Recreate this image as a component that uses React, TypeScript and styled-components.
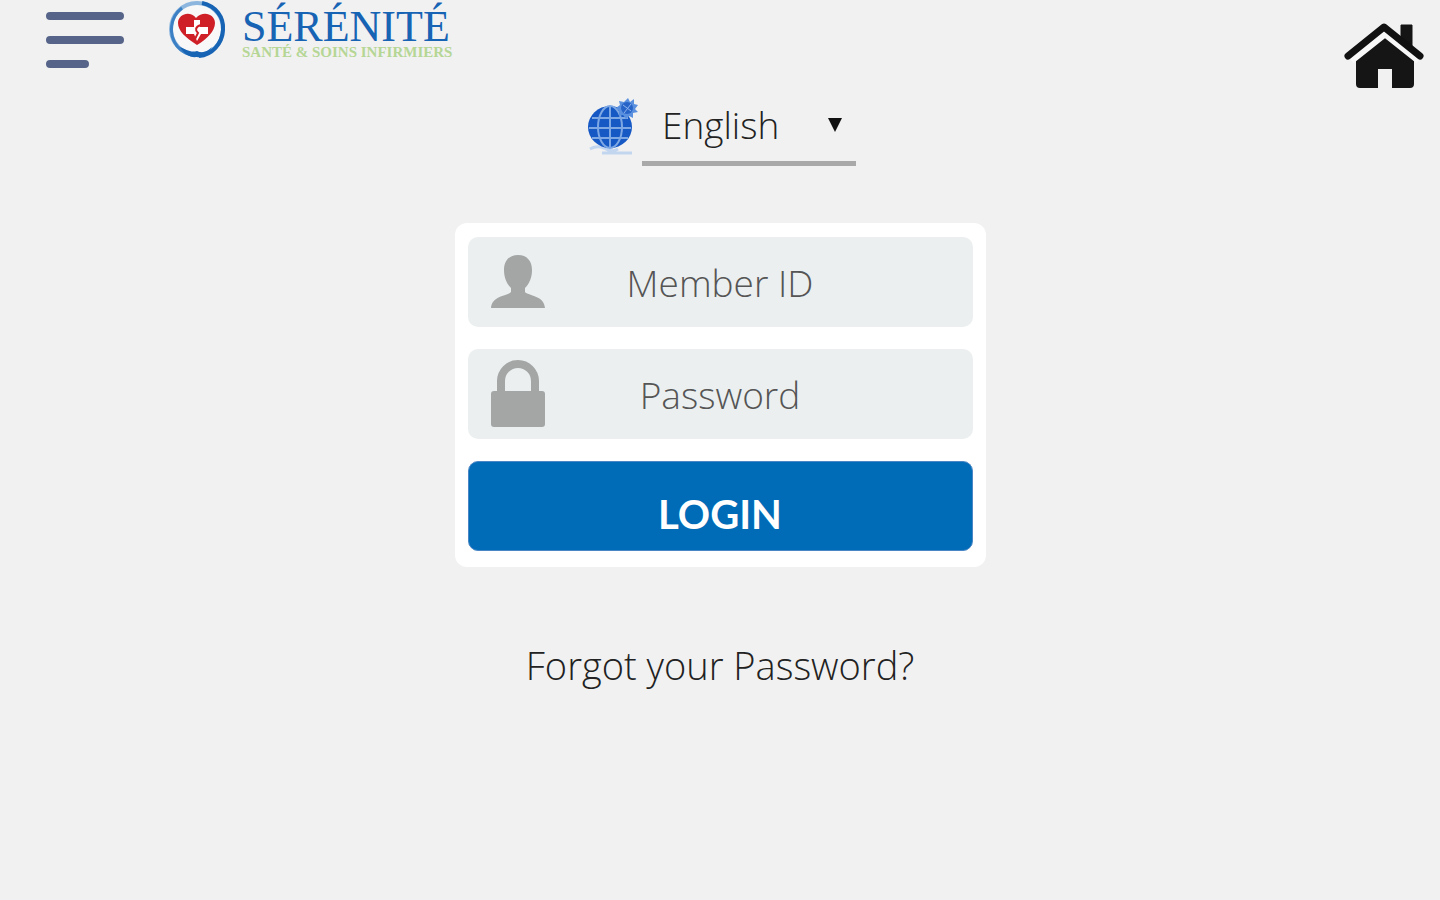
import React, { useState } from "react";
import styled, { createGlobalStyle } from "styled-components";

const GlobalStyle = createGlobalStyle`
  *, *::before, *::after { box-sizing: border-box; }
  body {
    margin: 0;
    background: #f1f1f1;
    color: #222;
    font-family: "Open Sans", "Noto Sans", sans-serif;
    font-weight: 300;
  }
  button, input, select { font: inherit; color: inherit; margin: 0; }
`;

const Page = styled.div`
  display: flex;
  flex-direction: column;
  min-height: 100vh;
`;

const Header = styled.header`
  display: flex;
  align-items: flex-start;
  height: 96px;
  padding: 0 14px 0 44px;
`;

const MenuButton = styled.button`
  display: flex;
  padding: 8px 0 0;
  border: 0;
  background: none;
  cursor: pointer;
`;

const Brand = styled.a`
  display: flex;
  align-items: flex-start;
  gap: 16px;
  margin-left: 42px;
  text-decoration: none;
`;

const BrandText = styled.span`
  display: flex;
  flex-direction: column;
  padding-top: 8px;
  font-family: "Liberation Serif", serif;
  font-weight: 400;
  white-space: nowrap;
`;

const BrandName = styled.span`
  color: #1763b4;
  font-size: 44px;
  line-height: 38px;
`;

const BrandTagline = styled.span`
  color: #b5d694;
  font-size: 15px;
  font-weight: 700;
  line-height: 12px;
`;

const HomeLink = styled.a`
  display: flex;
  margin-left: auto;
  padding-top: 22px;
`;

const Main = styled.main`
  display: flex;
  flex-direction: column;
  align-items: center;
  padding: 0 16px;
`;

const Language = styled.div`
  display: flex;
  align-items: flex-start;
  gap: 4px;
  padding-left: 4px;
`;

const SelectBox = styled.div`
  display: grid;
  align-items: center;
  width: 214px;
  height: 70px;
  border-bottom: 5px solid #a9a9a9;

  > * { grid-area: 1 / 1; }
  > svg { justify-self: end; margin-right: 14px; margin-bottom: 8px; pointer-events: none; }
`;

const Select = styled.select`
  appearance: none;
  width: 100%;
  height: 60px;
  padding: 0 40px 8px 20px;
  border: 0;
  background: none;
  font-size: 37px;
`;

const Card = styled.form`
  display: flex;
  flex-direction: column;
  gap: 22px;
  width: 100%;
  max-width: 531px;
  margin-top: 57px;
  padding: 14px 13px 16px;
  border-radius: 12px;
  background: #fff;
`;

const Field = styled.label`
  display: grid;
  align-items: center;
  height: 90px;
  border-radius: 10px;
  background: #ebeff0;

  > * { grid-area: 1 / 1; }
  > svg { margin-left: 22px; pointer-events: none; }
`;

const Input = styled.input`
  width: 100%;
  height: 90px;
  padding: 0 80px;
  border: 0;
  border-radius: 10px;
  background: none;
  font-size: 37px;
  text-align: center;

  &::placeholder { color: #555; opacity: 1; }
`;

const LoginButton = styled.button`
  height: 90px;
  padding: 16px 0 0;
  border: 1px solid #4a86c6;
  border-radius: 10px;
  background: #006cb8;
  color: #fff;
  font-family: Lato, sans-serif;
  font-size: 40px;
  font-weight: 700;
  cursor: pointer;
`;

const ForgotLink = styled.a`
  margin: 73px 0 40px;
  color: #222;
  font-size: 38px;
  line-height: 50px;
  text-decoration: none;
`;

const MenuIcon = () => (
  <svg width="82" height="64" viewBox="0 0 82 64" aria-hidden="true">
    <path d="M6 8H76M6 32H76M6 56H41" stroke="#56648a" strokeWidth="8" strokeLinecap="round" />
  </svg>
);

const BrandMark = () => (
  <svg width="58" height="60" viewBox="0 0 58 60" fill="none" aria-hidden="true">
    <circle cx="29" cy="29" r="26" fill="#f8f8f8" stroke="#8db6df" strokeWidth="4" />
    <path d="M14 8C2 17 0 34 9 46c5 6 12 9 18 9" stroke="#3b80c4" strokeWidth="3" />
    <path d="M34 3c14 3 22 14 21 27-1 14-11 25-24 26" stroke="#1763b4" strokeWidth="4" />
    <path d="M12 47c6 2 10 6 17 4 6 3 11 0 15-4-4 8-10 11-15 10-7 1-13-3-17-10Z" fill="#1763b4" />
    <path d="M29 45C18 38 10 31 10 23c0-9 12-13 18-5 7-8 19-4 19 5 0 8-8 16-18 22Z" fill="#cf2028" />
    <path d="M26 20h6v7h8v7h-7l-4 7-3-7h-8v-7h8Z" fill="#fff" />
    <path d="M33 25c-6 2-6 5-3 8l-3 6" stroke="#cf2028" strokeWidth="2" />
  </svg>
);

const HomeIcon = () => (
  <svg width="82" height="68" viewBox="0 0 82 68" aria-hidden="true">
    <path d="M57 3h11v26L57 20Z" fill="#151515" stroke="#151515" strokeWidth="1" strokeLinejoin="round" />
    <path d="M12 38 41 14l29 23v25q0 4-4 4H48V47H34v19H16q-4 0-4-4Z" fill="#151515" />
    <path d="M7 38 41 11l34 27" fill="none" stroke="#f8f8f8" strokeWidth="8" />
    <path d="M4 34 40 5l36 29" fill="none" stroke="#111" strokeWidth="7" strokeLinejoin="round" strokeLinecap="round" />
  </svg>
);

const GlobeIcon = () => (
  <svg width="50" height="60" viewBox="0 0 50 60" fill="none" aria-hidden="true">
    <path d="M2 53q7-4 14-1 8 5 14 1M14 57h30" stroke="#c3d6f0" strokeWidth="3" />
    <ellipse cx="22" cy="31" rx="22" ry="21" fill="#1759c4" />
    <path d="M4 22h36M1 32h42M4 42h36" stroke="#7ea8e4" strokeWidth="2" />
    <path d="M22 10v42" stroke="#7ea8e4" strokeWidth="2" />
    <ellipse cx="22" cy="31" rx="12" ry="21" stroke="#7ea8e4" strokeWidth="2" />
    <path d="m40 2 2 4 4-3v5l4 1-3 4 3 3-5 1v5l-4-2-3 3-3-4-4 1V15l-3-3 4-3-1-4 5 1Z" fill="#5b90df" />
    <circle cx="39" cy="12" r="6" fill="#2864c8" />
    <path d="m35 9 8 6M43 8l-7 9" stroke="#8db4ee" strokeWidth="1" />
  </svg>
);

const ArrowIcon = () => (
  <svg width="14" height="14" viewBox="0 0 14 14" aria-hidden="true">
    <path d="M0 0h14L7 14Z" fill="#111" />
  </svg>
);

const UserIcon = () => (
  <svg width="56" height="56" viewBox="0 0 56 56" aria-hidden="true">
    <path d="M28 1c9 0 14 6 14 15 0 8-3 14-7 18v4c3 4 19 3 20 16H1c1-13 17-12 20-16v-4c-4-4-7-10-7-18C14 7 19 1 28 1Z" fill="#a3a6a5" />
  </svg>
);

const LockIcon = () => (
  <svg width="56" height="68" viewBox="0 0 56 68" aria-hidden="true">
    <path d="M11 34V21a17 17 0 0 1 34 0v13" fill="none" stroke="#a3a6a5" strokeWidth="8" />
    <rect x="1" y="31" width="54" height="36" rx="3" fill="#a3a6a5" />
  </svg>
);

export default function App() {
  const [language, setLanguage] = useState("English");

  return (
    <Page>
      <GlobalStyle />
      <Header>
        <MenuButton type="button" aria-label="Menu">
          <MenuIcon />
        </MenuButton>
        <Brand href="#">
          <BrandMark />
          <BrandText>
            <BrandName>SÉRÉNITÉ</BrandName>
            <BrandTagline>SANTÉ &amp; SOINS INFIRMIERS</BrandTagline>
          </BrandText>
        </Brand>
        <HomeLink href="#" aria-label="Home">
          <HomeIcon />
        </HomeLink>
      </Header>
      <Main>
        <Language>
          <GlobeIcon />
          <SelectBox>
            <Select
              aria-label="Language"
              value={language}
              onChange={(event) => setLanguage(event.target.value)}
            >
              <option>English</option>
            </Select>
            <ArrowIcon />
          </SelectBox>
        </Language>
        <Card onSubmit={(event) => event.preventDefault()}>
          <Field>
            <Input type="text" placeholder="Member ID" aria-label="Member ID" />
            <UserIcon />
          </Field>
          <Field>
            <Input type="password" placeholder="Password" aria-label="Password" />
            <LockIcon />
          </Field>
          <LoginButton type="submit">LOGIN</LoginButton>
        </Card>
        <ForgotLink href="#">Forgot your Password?</ForgotLink>
      </Main>
    </Page>
  );
}
